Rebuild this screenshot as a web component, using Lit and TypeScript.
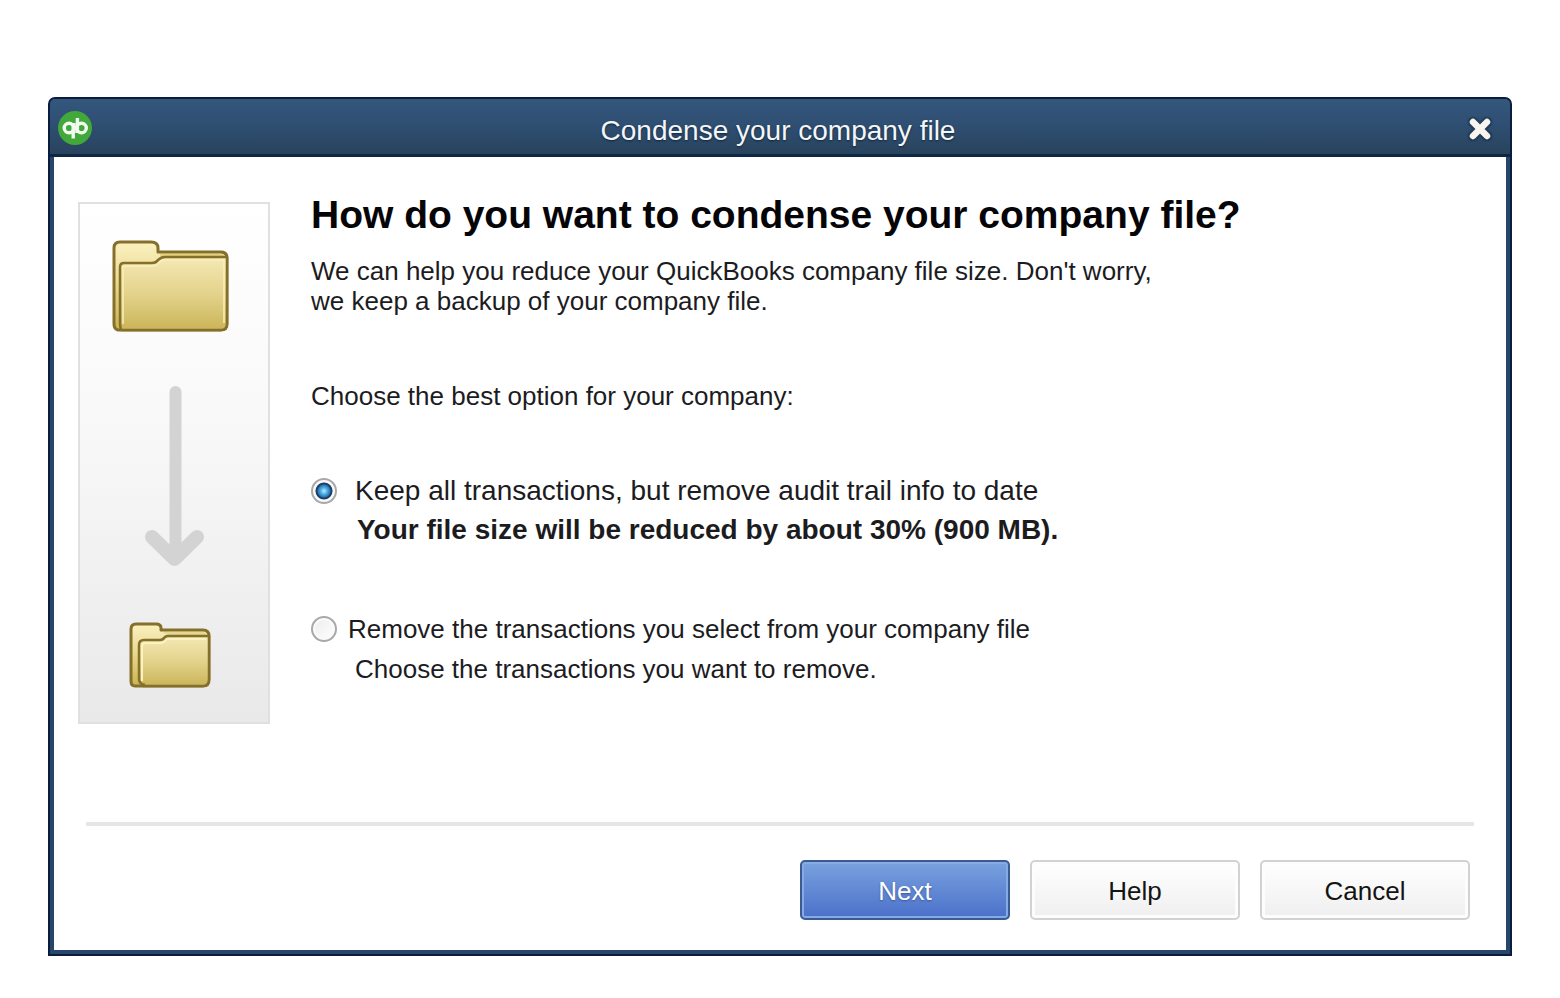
import { LitElement, html, css, svg } from "lit";
import { customElement, property, state } from "lit/decorators.js";

@customElement("folder-icon")
class FolderIcon extends LitElement {
  @property({ type: Boolean }) small = false;

  static styles = css`
    :host { display: block; }
    svg { display: block; }
  `;

  private shapes() {
    return this.small
      ? svg`
        <path d="M6 64Q2 64 2 59V7Q2 2 7 2H27Q32 2 32 6V8H74Q80 8 80 14V58Q80 64 74 64Z"
          fill="url(#back)" stroke="#84702a" stroke-width="3" stroke-linejoin="round"/>
        <path d="M34 10H73Q77 10 78 13H38Z" fill="#e5d890"/>
        <path d="M16 63Q10 62 10 57V23Q10 18 15 18H31Q34 18 36 15Q37 14 40 14H80V57Q80 64 74 64H14"
          fill="url(#front)" stroke="#84702a" stroke-width="2.5" stroke-linejoin="round"/>
        <path d="M13 59V24Q13 21 17 21H33Q36 20 38 17H77" fill="none" stroke="#fbf3c2" stroke-width="2"/>`
      : svg`
        <path d="M6 90Q2 89 2 84V8Q2 2 8 2H39Q46 2 46 8V12H109Q115 12 115 18V84Q115 90 109 90Z"
          fill="url(#back)" stroke="#84702a" stroke-width="3" stroke-linejoin="round"/>
        <path d="M48 14H108Q112 14 113 17H49Z" fill="#e3d177"/>
        <path d="M9 89Q8 87 8 83V27Q8 23 12 23H40Q44 23 46 20Q49 17 53 17H115V84Q115 90 109 90H9"
          fill="url(#front)" stroke="#84702a" stroke-width="2.5" stroke-linejoin="round"/>
        <path d="M11 84V28Q11 26 14 26H42Q46 25 48 22Q50 20 54 20H112V83" fill="none" stroke="#f9efbb" stroke-width="1.5"/>`;
  }

  render() {
    const [w, h] = this.small ? [82, 66] : [117, 92];
    return html`
      <svg width=${w} height=${h} viewBox="0 0 ${w} ${h}" aria-hidden="true">
        <defs>
          <linearGradient id="back" x1="0" y1="0" x2="0" y2="1">
            <stop offset="0" stop-color="#fbf0c0" />
            <stop offset="0.4" stop-color="#ecdd98" />
            <stop offset="1" stop-color="#c9b450" />
          </linearGradient>
          <linearGradient id="front" x1="0" y1="0" x2="0" y2="1">
            <stop offset="0" stop-color="#f5e9b4" />
            <stop offset="0.5" stop-color="#e3d38c" />
            <stop offset="1" stop-color="#cbb559" />
          </linearGradient>
        </defs>
        ${this.shapes()}
      </svg>
    `;
  }
}

@customElement("app-root")
class AppRoot extends LitElement {
  @state() private choice = "audit";

  static styles = css`
    :host {
      display: flex;
      box-sizing: border-box;
      min-height: 100vh;
      padding: 97px 48px 42px;
      background: #fff;
      color: #1c1c1f;
      font-family: "Liberation Sans", Arial, sans-serif;
      font-size: 26px;
      line-height: 30px;
    }
    * { box-sizing: border-box; }

    .window {
      flex: 1;
      display: flex;
      flex-direction: column;
      border: 2px solid #0b1d3e;
      border-radius: 7px 7px 0 0;
      background: #27466c;
      overflow: hidden;
    }
    .titlebar {
      display: grid;
      grid-template-columns: 48px 1fr 48px;
      align-items: center;
      height: 58px;
      padding-top: 2px;
      border-bottom: 3px solid #0f2747;
      background: linear-gradient(#34577b, #2f4f73 45%, #28435c);
    }
    .logo { display: block; margin-left: 8px; }
    .title {
      margin: 0;
      padding: 6px 4px 0 0;
      text-align: center;
      font-size: 28px;
      font-weight: 400;
      line-height: 32px;
      color: #f4f6f8;
      text-shadow: 0 1px 2px #12253d;
    }
    .close {
      display: grid;
      place-items: center;
      width: 36px;
      height: 36px;
      padding: 2px 0 0;
      border: 0;
      background: none;
      cursor: pointer;
    }

    .content {
      flex: 1;
      display: flex;
      flex-direction: column;
      margin: 0 4px 4px;
      background: #fff;
    }
    .body {
      flex: 1;
      display: flex;
      align-items: flex-start;
      gap: 41px;
      padding: 35px 24px 0;
    }

    .steps {
      flex: none;
      display: flex;
      flex-direction: column;
      align-items: center;
      width: 192px;
      margin-top: 10px;
      padding: 36px 8px 34px 0;
      border: 2px solid #e0e0e0;
      background: linear-gradient(#fff, #f9f9f9 40%, #e9e9e9);
    }
    .arrow { display: block; margin: 53px 0; }

    .form { flex: 1; min-width: 0; }
    h1 {
      margin: 0;
      font-size: 39px;
      font-weight: 700;
      line-height: 46px;
      color: #050508;
    }
    .intro { margin: 18px 0 0; }
    fieldset {
      display: flex;
      flex-direction: column;
      gap: 60px;
      margin: 65px 0 0;
      padding: 0;
      border: 0;
    }
    legend { margin-bottom: 60px; padding: 0; }

    .option {
      display: grid;
      grid-template-columns: 26px 1fr;
      column-gap: 11px;
      line-height: 40px;
    }
    .note { grid-column: 2; padding-left: 7px; }
    .spacious { font-size: 28px; line-height: 39px; }
    .spacious label { padding-left: 7px; }
    .spacious .note { padding-left: 9px; font-weight: 700; }

    input {
      appearance: none;
      align-self: center;
      width: 26px;
      height: 26px;
      margin: 0;
      border: 2px solid #a9a9a9;
      border-radius: 50%;
      background: linear-gradient(135deg, #ececec, #fff);
      box-shadow: inset 0 0 0 2px #fafafa;
    }
    input:checked {
      background: radial-gradient(
        circle at 50% 50%,
        #c3ecfc 0,
        #55b5e8 3px,
        #2777b5 6px,
        #1c3f66 7px,
        #1c3f66 8px,
        #f3f3f3 9px
      );
    }

    .footer {
      display: flex;
      flex-wrap: wrap;
      justify-content: flex-end;
      gap: 20px;
      margin: 0 32px;
      padding: 34px 4px 30px 0;
      border-top: 4px solid #e6e6e6;
    }
    .btn {
      width: 210px;
      height: 60px;
      padding: 2px 0 0;
      border: 2px solid #d2d2d2;
      border-radius: 5px;
      background: linear-gradient(#fff, #efefef);
      box-shadow: inset 0 0 0 3px #fdfdfd;
      color: #141414;
      font: inherit;
      cursor: pointer;
    }
    .primary {
      border-color: #3a5c92;
      background: linear-gradient(#79a2de, #4b70ca);
      box-shadow: inset 0 0 0 2px #86abe4;
      color: #fff;
      text-shadow: 0 1px 2px #3c5791;
    }
  `;

  render() {
    return html`
      <main class="window">
        <header class="titlebar">
          <svg class="logo" width="34" height="34" viewBox="0 0 34 34" role="img" aria-label="QuickBooks">
            <circle cx="17" cy="17" r="17" fill="#42a83c" />
            <path d="M15 12H20V22H15Z" fill="#b9e0b5" />
            <g fill="none" stroke="#f2fbef" stroke-width="3.4">
              <circle cx="11" cy="17" r="4.8" />
              <circle cx="23.5" cy="17" r="4.8" />
              <path d="M15.2 12V27.5M19.4 7V22" />
            </g>
          </svg>
          <h2 class="title">Condense your company file</h2>
          <button class="close" aria-label="Close">
            <svg width="28" height="28" viewBox="0 0 28 28" aria-hidden="true">
              <path d="M7 7L21 21M21 7L7 21" stroke="#172c47" stroke-width="11" stroke-linecap="round" opacity="0.45" />
              <path d="M7 7L21 21M21 7L7 21" stroke="#f7f5ee" stroke-width="6.5" stroke-linecap="round" />
            </svg>
          </button>
        </header>

        <div class="content">
          <div class="body">
            <aside class="steps">
              <folder-icon></folder-icon>
              <svg class="arrow" width="60" height="184" viewBox="0 0 60 184" aria-hidden="true" overflow="visible">
                <g fill="none" stroke="#d3d3d3" stroke-linecap="round" stroke-linejoin="round">
                  <path d="M35.5 7V170" stroke-width="12" />
                  <path d="M12 152L34.5 174L57 152" stroke-width="14" />
                </g>
              </svg>
              <folder-icon small></folder-icon>
            </aside>

            <section class="form">
              <h1>How do you want to condense your company file?</h1>
              <p class="intro">
                We can help you reduce your QuickBooks company file size. Don't worry,<br />
                we keep a backup of your company file.
              </p>
              <fieldset>
                <legend>Choose the best option for your company:</legend>
                <div class="option spacious">
                  <input id="audit" type="radio" name="mode" .checked=${this.choice === "audit"}
                    @change=${() => (this.choice = "audit")} />
                  <label for="audit">Keep all transactions, but remove audit trail info to date</label>
                  <span class="note">Your file size will be reduced by about 30% (900 MB).</span>
                </div>
                <div class="option">
                  <input id="select" type="radio" name="mode" .checked=${this.choice === "select"}
                    @change=${() => (this.choice = "select")} />
                  <label for="select">Remove the transactions you select from your company file</label>
                  <span class="note">Choose the transactions you want to remove.</span>
                </div>
              </fieldset>
            </section>
          </div>

          <footer class="footer">
            <button class="btn primary">Next</button>
            <button class="btn">Help</button>
            <button class="btn">Cancel</button>
          </footer>
        </div>
      </main>
    `;
  }
}
